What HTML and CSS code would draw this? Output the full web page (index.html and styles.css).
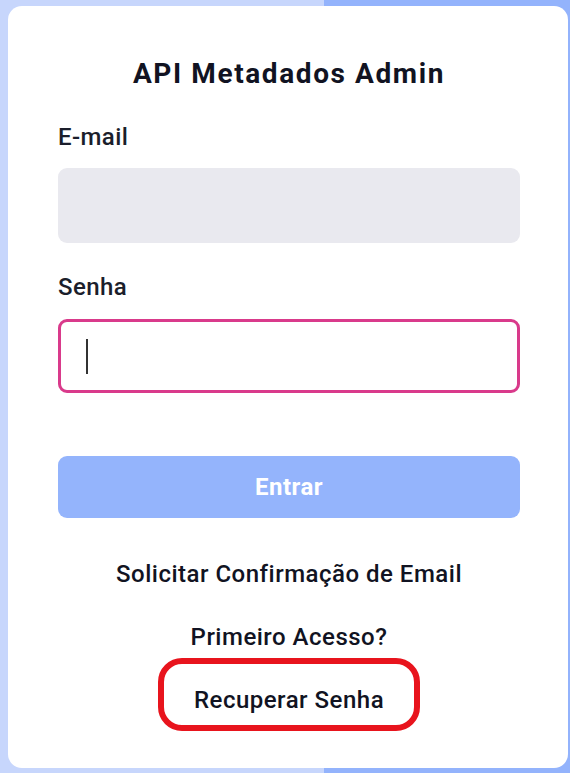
FILE: index.html
```html
<!DOCTYPE html>
<html lang="pt-BR">
<head>
<meta charset="utf-8">
<title>API Metadados Admin</title>
<link rel="stylesheet" href="styles.css">
</head>
<body>
<div class="page">
  <main class="card">
    <h1 class="title">API Metadados Admin</h1>
    <form class="form">
      <label class="label">E-mail</label>
      <div class="field field-email"></div>
      <label class="label label-senha">Senha</label>
      <div class="field field-senha"><span class="caret"></span></div>
      <button type="button" class="btn">Entrar</button>
    </form>
    <nav class="links">
      <a class="link">Solicitar Confirmação de Email</a>
      <a class="link">Primeiro Acesso?</a>
      <a class="link link-marked">Recuperar Senha</a>
    </nav>
  </main>
</div>
</body>
</html>
```
FILE: styles.css
```css
* { box-sizing: border-box; }
html, body { margin: 0; padding: 0; }
body {
  width: 570px;
  height: 773px;
  overflow: hidden;
  font-family: Roboto, "Noto Sans", sans-serif;
  background: linear-gradient(to right, #c7d6fc 0, #c7d6fc 324px, #93b3fc 324px, #93b3fc 100%);
}
.page {
  padding: 6px 2px 5px 8px;
  height: 773px;
}
.card {
  background: #ffffff;
  border-radius: 14px;
  height: 762px;
  padding: 52px 48px 0 50px;
  display: flex;
  flex-direction: column;
}
.title {
  margin: 0;
  text-align: center;
  font-size: 28px;
  line-height: 32px;
  font-weight: 700;
  letter-spacing: 1.6px;
  color: #111322;
}
.form {
  display: flex;
  flex-direction: column;
  margin-top: 33px;
}
.label {
  font-size: 24px;
  line-height: 28px;
  font-weight: 500;
  letter-spacing: 0.4px;
  color: #1b1e2b;
}
.label-senha { margin-top: 30px; }
.field {
  margin-top: 17px;
  height: 75px;
  border-radius: 9px;
  display: flex;
  align-items: center;
}
.field-email { background: #e9e9ef; }
.field-senha {
  margin-top: 18px;
  height: 74px;
  border: 3px solid #d93a8b;
  padding-left: 25px;
}
.caret {
  width: 2px;
  height: 35px;
  background: #333;
}
.btn {
  margin-top: 63px;
  height: 62px;
  border: none;
  border-radius: 9px;
  background: #94b4fc;
  color: #ffffff;
  font-family: Roboto, "Noto Sans", sans-serif;
  font-size: 24px;
  font-weight: 700;
  letter-spacing: 0.5px;
}
.links {
  display: flex;
  flex-direction: column;
  align-items: center;
  margin-top: 42px;
  gap: 35px;
}
.link {
  font-size: 24px;
  line-height: 28px;
  font-weight: 500;
  letter-spacing: 0.5px;
  color: #111322;
}
.link-marked {
  position: relative;
}
.link-marked::after {
  content: "";
  position: absolute;
  left: -36px;
  right: -36px;
  top: -28px;
  bottom: -17px;
  border: 6px solid #e8141d;
  border-radius: 24px;
}
```
